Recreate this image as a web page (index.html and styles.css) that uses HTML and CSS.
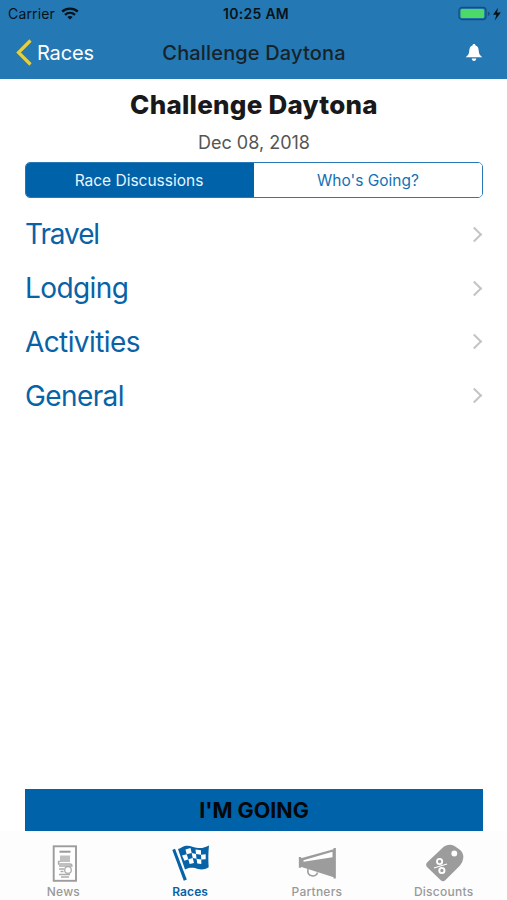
FILE: index.html
```html
<!DOCTYPE html>
<html lang="en">
<head>
<meta charset="utf-8">
<meta name="viewport" content="width=device-width, initial-scale=1">
<title>Challenge Daytona</title>
<link rel="stylesheet" href="styles.css">
</head>
<body>
<div class="app">
  <header class="header">
    <div class="status">
      <div class="carrier"><span>Carrier</span>
        <svg class="wifi" width="18" height="13" viewBox="0 0 18 13"><g fill="none" stroke="#071219" stroke-width="2.3"><path d="M1.2 4.600C5.600.6 12.400.6 16.800 4.600"/><path d="M4 7.800c3-2.700 7-2.700 10 0"/></g><path d="M9 12.600 6.300 9.900c1.500-1.300 3.900-1.300 5.400 0z" fill="#071219"/></svg>
      </div>
      <time class="clock">10:25 AM</time>
      <div class="power">
        <svg width="44" height="16" viewBox="0 0 44 16"><rect x="1" y="1.500" width="27" height="12" rx="3" fill="none" stroke="#155078" stroke-width="1.300"/><rect x="2.600" y="3" width="23.500" height="9" rx="1.500" fill="#4bda67"/><path d="M29.800 5.500q2 .6 2 2.200t-2 2.200z" fill="#155078"/><path d="M40 1.700 35 8.700h3.400L36.800 14.500l6-7.900h-3.800z" fill="#071219"/></svg>
      </div>
    </div>
    <nav class="navbar">
      <a class="back"><svg width="17" height="28" viewBox="0 0 17 28"><path d="M14.500 2.500 2.500 14.500l12 12" fill="none" stroke="#e5cf3f" stroke-width="3.200"/></svg><span>Races</span></a>
      <div class="nav-title">Challenge Daytona</div>
      <div class="alerts"><svg width="18" height="18" viewBox="0 0 18 18"><path d="M9 0c-1 0-1.500.7-1.500 1.500C5 2.200 4.400 4.500 4.200 7.200 4 9.800 3.200 11 .7 13.200h16.600c-2.500-2.200-3.300-3.400-3.500-6C13.600 4.500 13 2.200 10.500 1.500 10.500.7 10 0 9 0zM6.800 14.500h4.400c0 1.500-.8 2.500-2.200 2.500s-2.200-1-2.200-2.500z" fill="#fff"/></svg></div>
    </nav>
  </header>
  <main class="content">
    <h1 class="title">Challenge Daytona</h1>
    <p class="date">Dec 08, 2018</p>
    <div class="segments"><button class="segment active">Race Discussions</button><button class="segment">Who's Going?</button></div>
    <ul class="topics">
      <li><span class="travel">Travel</span><i class="chevron"></i></li>
      <li><span>Lodging</span><i class="chevron"></i></li>
      <li><span>Activities</span><i class="chevron"></i></li>
      <li><span>General</span><i class="chevron"></i></li>
    </ul>
    <button class="cta">I'M GOING</button>
  </main>
  <footer class="tabs">
    <a class="tab"><svg width="40" height="40" viewBox="0 0 40 40"><rect x="10.700" y="3.300" width="22.300" height="34.500" fill="#fff" stroke="#9c9c9c" stroke-width="1.900"/><path d="M16.500 8.700h11" stroke="#999" stroke-width="2"/><path d="M17 12.500h10v6.500H17z" fill="#c0c0c0"/><g fill="none" stroke="#acacac" stroke-width="1.300"><path d="M17 18.500h-1.500v2.500h11.500q2 0 2 2H16M16 26h5m-3.500 2.500h3M16 31.500h11M18 34h8"/><circle cx="25" cy="27" r="3.300"/></g></svg><span>News</span></a>
    <a class="tab selected"><svg width="40" height="40" viewBox="0 0 40 40"><path d="M2.300 7 5 5.700 16.800 36.500 13.800 37.700z" fill="#0862a6"/><path d="M8 6c2.500-.2 4-2.500 8-3.200 4.500-.6 7 1.700 12 2.200 4.500.4 7.500-.7 11-2.500-.8 7-.8 15-.3 21.800-3.500 2.200-7 2.700-10.700 1.700-4-1.200-7.500-2-13 .5z" fill="#0862a6"/><g fill="#fff"><path d="m15.500 6.500 5-1.500 1.200 5-5 1.300zM25.500 6.500l5.500.7v4.500l-5-.7zM12 12.500l4.700-1.200 1.600 5-3.800 1.500zM21.700 10l4.300 1 .5 4.800-3.800-.8zM31 11.700l4.700-.5v5l-4.400.3zM18.300 16.300l4.400-1.300 1.300 5-4.300 1zM26.500 15.800l4.800.7v4.500l-4-.5z"/></g></svg><span>Races</span></a>
    <a class="tab"><svg width="40" height="40" viewBox="0 0 40 40"><path d="m3 15.500 34.500-9.500v28.500L3 23.500z" fill="#9c9c9c"/><path d="M6.500 17.300 35.500 8.700v5.500L6.500 18.800z" fill="#fff"/><path d="M3 14v10.800M37.700 5v30.500" stroke="#9c9c9c" stroke-width="2.300"/><path d="M11 26c-1.500 8.500 8.500 8.500 9.500 3.500" fill="none" stroke="#9c9c9c" stroke-width="1.600"/></svg><span>Partners</span></a>
    <a class="tab"><svg width="40" height="40" viewBox="0 0 40 40"><path d="M20 3.500Q25 .5 30.500 3l5 3.500q4.500 3.500 3.700 8.700Q38.700 20 36 22.500L21.500 37q-2.500 2.500-5 0L3 24q-2-2.500.5-5z" fill="#9c9c9c"/><circle cx="30.300" cy="10.500" r="2.900" fill="#fff"/><g fill="none" stroke="#fff" stroke-width="1.900"><circle cx="15.600" cy="18.500" r="2.600"/><circle cx="17.900" cy="27.500" r="2.600"/><path d="M10 25 23 21" stroke-width="1.300"/></g></svg><span>Discounts</span></a>
  </footer>
</div>
</body>
</html>
```
FILE: styles.css
```css
* { box-sizing: border-box; }
body { margin: 0; background: #fff; font-family: Inter, "Liberation Sans", sans-serif; }
button { font: inherit; border: 0; padding: 0; margin: 0; }
svg { display: block; flex: none; }
.app { width: 507px; height: 900px; display: flex; flex-direction: column; overflow: hidden; }

.header { height: 79px; background: #2479b4; flex: none; }
.status { height: 27px; padding: 0 5px 0 8px; display: grid; grid-template-columns: 1fr auto 1fr; align-items: center; color: #071219; font-size: 14px; }
.carrier { display: flex; align-items: center; gap: 6px; letter-spacing: .15px; }
.clock { font-weight: 600; letter-spacing: .3px; padding-left: 2px; }
.power { display: flex; justify-content: flex-end; }
.navbar { height: 52px; padding: 0 24px 0 16px; display: grid; grid-template-columns: 1fr auto 1fr; align-items: center; }
.back { display: flex; align-items: center; gap: 4px; color: #fff; font-size: 20px; letter-spacing: -.15px; }
.back svg { margin-top: -3px; }
.nav-title { color: #172329; font-size: 20px; font-weight: 500; letter-spacing: .15px; padding-left: 9px; }
.alerts { display: flex; justify-content: flex-end; padding-bottom: 1px; }

.content { flex: 1; padding: 10px 24px 0 25px; display: flex; flex-direction: column; }
.title { margin: 0; font-size: 26px; line-height: 32px; font-weight: 800; letter-spacing: .24px; color: #19191b; text-align: center; }
.date { margin: 10px 0 7px; font-size: 18px; line-height: 24px; color: #555; text-align: center; }
.segments { height: 36px; flex: none; display: grid; grid-template-columns: 1fr 1fr; border: 1.5px solid #2878b5; border-radius: 5px; overflow: hidden; }
.segment { background: #fff; color: #1470b5; font-size: 15.5px; }
.segment.active { background: #0062a8; color: #e8f5ff; padding-right: 2px; }
.topics { list-style: none; margin: 9.5px 0 0; padding: 0; color: #0862a6; font-size: 28px; letter-spacing: -.6px; }
.topics li { height: 53.8px; display: flex; align-items: center; justify-content: space-between; }
.topics .travel { letter-spacing: -1.1px; }
.chevron { width: 11px; height: 11px; margin-right: 3px; border: solid #c4c4c6; border-width: 2px 2px 0 0; transform: rotate(45deg); }
.cta { height: 42px; margin-top: auto; background: #0062a8; color: #050709; font-size: 21.5px; font-weight: 700; }

.tabs { height: 69px; flex: none; display: grid; grid-template-columns: repeat(4, 1fr); background: #fdfdfd; color: #999; }
.tab { display: flex; flex-direction: column; align-items: center; padding-top: 12px; font-size: 12px; line-height: 18px; font-weight: 500; letter-spacing: .25px; }
.tab.selected { color: #0862a6; font-weight: 600; letter-spacing: .1px; }
```
